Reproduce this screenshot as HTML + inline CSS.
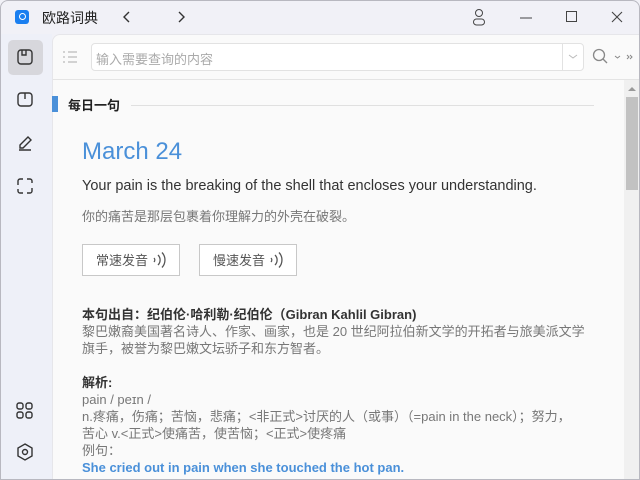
<!DOCTYPE html>
<html><head><meta charset="utf-8"><style>
*{margin:0;padding:0;box-sizing:border-box}
body{width:640px;height:480px;overflow:hidden;background:#f1f1f7;font-family:"Liberation Sans","Noto Sans CJK SC",sans-serif;position:relative}
.frame{position:absolute;inset:0;border:1px solid #b8b8c0;border-radius:8px 8px 0 0;pointer-events:none}
.abs{position:absolute}
.side{left:1px;top:34px;width:51px;height:446px;background:#eef0f8}
.panel{left:52px;top:34px;width:588px;height:446px;background:#fafafa;border-top-left-radius:8px;border:1px solid #e6e6ea;border-right:none;border-bottom:none}
.t{position:absolute;white-space:nowrap}
.body{font-size:13px;color:#777;line-height:17px}
.btn{position:absolute;top:244px;height:32px;width:98px;border:1px solid #c8c8c8;background:#fff;font-size:13px;color:#555;padding:5px 0 0 13px}
</style></head><body>
<div class="abs side"></div>
<div class="abs" style="left:15px;top:10px;width:14px;height:14px;background:#1a7ff0;border-radius:3px"></div>
<div class="abs" style="left:19px;top:13px;width:7px;height:7px;border:1.5px solid #fff;border-radius:50%"></div>
<div class="t" style="left:42px;top:8px;font-size:14px;color:#222">欧路词典</div>
<svg class="abs" style="left:120px;top:10px" width="70" height="14"><path d="M9 2 L4 7 L9 12" stroke="#333" fill="none" stroke-width="1.4"/><path d="M59 2 L64 7 L59 12" stroke="#333" fill="none" stroke-width="1.4"/></svg>
<svg class="abs" style="left:470px;top:8px" width="170" height="20">
<circle cx="9" cy="5" r="3.5" stroke="#444" fill="none"/><rect x="3.5" y="11" width="11" height="6" rx="3" stroke="#444" fill="none"/>
<path d="M50 10 H62" stroke="#444"/>
<rect x="96.5" y="3.5" width="10" height="10" stroke="#444" fill="none"/>
<path d="M142 4 L152 14 M152 4 L142 14" stroke="#444" stroke-width="1.1"/></svg>
<div class="abs panel"></div>
<div class="abs" style="left:8px;top:40px;width:35px;height:35px;background:#d7d7dc;border-radius:5px"></div>
<svg class="abs" style="left:16px;top:48px" width="20" height="200" fill="none" stroke="#333" stroke-width="1.4">
<rect x="2" y="2" width="14" height="14" rx="3"/><path d="M6 2 V7 H10 V2"/>
<rect x="2" y="45" width="14" height="13" rx="3"/><path d="M9 45 V51"/>
<path d="M3 102 H15 M4 97 L12 89 L15 92 L7 100 H4 Z"/>
<path d="M7 131 H4 a2 2 0 0 0 -2 2 V137 M11 131 H14 a2 2 0 0 1 2 2 V135 M2 141 V143 a2 2 0 0 0 2 2 H7 M16 140 V143 a2 2 0 0 1 -2 2 H11"/>
</svg>
<svg class="abs" style="left:16px;top:402px" width="20" height="62" fill="none" stroke="#333" stroke-width="1.4">
<rect x="1" y="1" width="6" height="6" rx="2"/><rect x="10" y="1" width="6" height="6" rx="2"/><rect x="1" y="10" width="6" height="6" rx="2"/><rect x="10" y="10" width="6" height="6" rx="2"/>
<path d="M9 42 L16 46 V54 L9 58 L2 54 V46 Z"/><circle cx="9" cy="50" r="2.5"/></svg>
<svg class="abs" style="left:62px;top:50px" width="16" height="14" stroke="#bbb" stroke-width="1.3"><path d="M1 2H3M6 2H15M1 7H3M6 7H15M1 12H3M6 12H15"/></svg>
<div class="abs" style="left:91px;top:43px;width:493px;height:28px;border:1px solid #e2e2e2;border-radius:4px;background:#fff"></div>
<div class="abs" style="left:562px;top:44px;width:1px;height:26px;background:#e2e2e2"></div>
<svg class="abs" style="left:568px;top:54px" width="10" height="6"><path d="M1 1 L5 4 L9 1" stroke="#bbb" fill="none"/></svg>
<div class="t" style="left:96px;top:49px;font-size:13px;color:#aaa">输入需要查询的内容</div>
<svg class="abs" style="left:592px;top:47px" width="48" height="20" fill="none" stroke="#888" stroke-width="1.3"><circle cx="7" cy="8" r="5.5"/><path d="M11 12 L15 16"/><path d="M23 9 L25.5 11 L28 9" stroke-width="1"/><path d="M35 8 L37 10 L35 12 M38 8 L40 10 L38 12" stroke-width="1"/></svg>
<div class="abs" style="left:53px;top:79px;width:587px;height:1px;background:#e4e4e4"></div>
<div class="abs" style="left:624px;top:80px;width:16px;height:400px;background:#f0f0f0"></div>
<svg class="abs" style="left:627px;top:86px" width="10" height="6"><path d="M1 5 L5 1 L9 5Z" fill="#999"/></svg>
<div class="abs" style="left:626px;top:97px;width:12px;height:93px;background:#c2c2c2"></div>
<div class="abs" style="left:52px;top:96px;width:6px;height:16px;background:#4a90d9"></div>
<div class="t" style="left:68px;top:95px;font-size:13px;font-weight:bold;color:#222">每日一句</div>
<div class="abs" style="left:131px;top:105px;width:463px;height:1px;background:#e0e0e0"></div>
<div class="t" style="left:82px;top:138px;font-size:24px;color:#4a90d9">March 24</div>
<div class="t" style="left:82px;top:178px;font-size:14.5px;color:#333">Your pain is the breaking of the shell that encloses your understanding.</div>
<div class="t" style="left:82px;top:206px;font-size:13px;color:#777">你的痛苦是那层包裹着你理解力的外壳在破裂。</div>
<div class="btn" style="left:82px">常速发音</div>
<div class="btn" style="left:199px">慢速发音</div>
<svg class="abs" style="left:150px;top:251px" width="16" height="18" fill="none" stroke="#555" stroke-width="1.3"><path d="M4 7 a3 3 0 0 1 0 4 M8 4 a7 7 0 0 1 0 10 M12 1.5 a11 11 0 0 1 0 15"/></svg>
<svg class="abs" style="left:267px;top:251px" width="16" height="18" fill="none" stroke="#555" stroke-width="1.3"><path d="M4 7 a3 3 0 0 1 0 4 M8 4 a7 7 0 0 1 0 10 M12 1.5 a11 11 0 0 1 0 15"/></svg>
<div class="t body" style="left:82px;top:306px;color:#333;font-weight:bold">本句出自：纪伯伦·哈利勒·纪伯伦（Gibran Kahlil Gibran)</div>
<div class="t body" style="left:82px;top:323px">黎巴嫩裔美国著名诗人、作家、画家，也是 20 世纪阿拉伯新文学的开拓者与旅美派文学</div>
<div class="t body" style="left:82px;top:340px">旗手，被誉为黎巴嫩文坛骄子和东方智者。</div>
<div class="t body" style="left:82px;top:374px;color:#333;font-weight:bold">解析:</div>
<div class="t body" style="left:82px;top:391px">pain / peɪn /</div>
<div class="t body" style="left:82px;top:408px">n.疼痛，伤痛；苦恼，悲痛；&lt;非正式&gt;讨厌的人（或事）（=pain in the neck）；努力，</div>
<div class="t body" style="left:82px;top:425px">苦心 v.&lt;正式&gt;使痛苦，使苦恼；&lt;正式&gt;使疼痛</div>
<div class="t body" style="left:82px;top:442px">例句：</div>
<div class="t body" style="left:82px;top:459px;color:#4a90d9;font-weight:bold">She cried out in pain when she touched the hot pan.</div>
<div class="frame"></div>
</body></html>
